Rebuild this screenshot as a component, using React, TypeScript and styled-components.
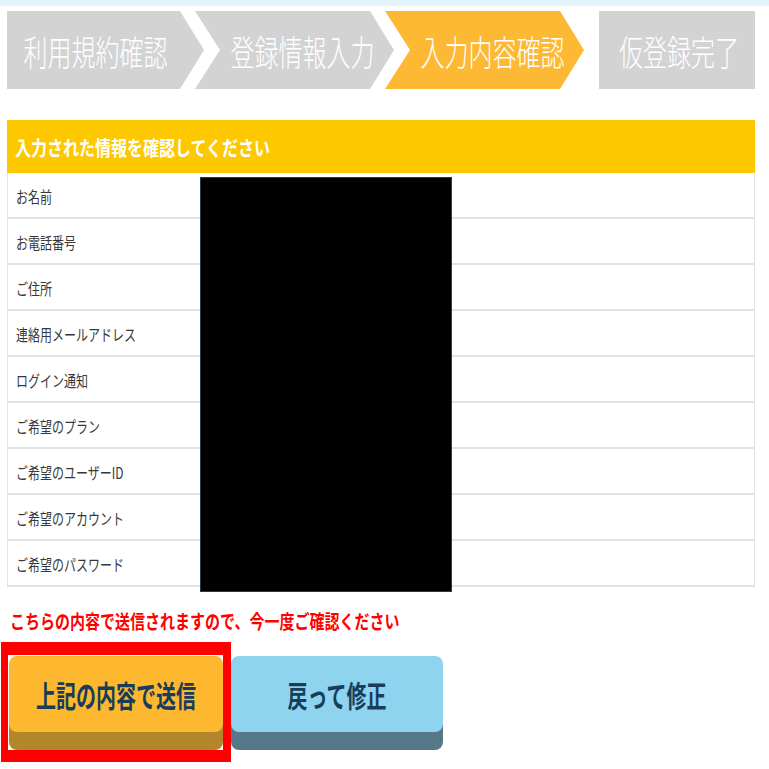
import React from "react";
import styled, { createGlobalStyle } from "styled-components";

const GlobalStyle = createGlobalStyle`
  html, body {
    margin: 0;
    padding: 0;
    background: #ffffff;
  }
  body {
    font-family: "Noto Sans CJK JP", "Noto Sans", sans-serif;
    color: #333333;
  }
`;

const Page = styled.div`
  width: 769px;
  height: 769px;
  overflow: hidden;
`;

const TopStrip = styled.div`
  height: 6px;
  background: #e4f4fc;
`;

const Steps = styled.div`
  display: flex;
  margin: 5px 0 0 7px;
  height: 78px;
`;

const Step = styled.div<{ $active?: boolean; $kind: "first" | "mid" | "last" }>`
  display: flex;
  align-items: center;
  justify-content: center;
  height: 100%;
  width: ${(p) => (p.$kind === "last" ? "156px" : p.$kind === "first" ? "197px" : "199px")};
  margin-left: ${(p) => (p.$kind === "first" ? "0" : p.$kind === "last" ? "15px" : "-9px")};
  padding: ${(p) =>
    p.$kind === "first" ? "0 20px 0 0" : p.$kind === "mid" ? "0 20px 0 36px" : "0 0 0 4px"};
  box-sizing: border-box;
  background: ${(p) => (p.$active ? "#fdb933" : "#d3d3d3")};
  color: #ffffff;
  font-size: 24px;
  font-weight: 300;
  clip-path: ${(p) =>
    p.$kind === "first"
      ? "polygon(0 0, calc(100% - 24px) 0, 100% 50%, calc(100% - 24px) 100%, 0 100%)"
      : p.$kind === "mid"
      ? "polygon(0 0, calc(100% - 24px) 0, 100% 50%, calc(100% - 24px) 100%, 0 100%, 25px 50%)"
      : "none"};
`;

const Tall = styled.span<{ $y?: number }>`
  display: inline-block;
  white-space: nowrap;
  transform: scaleY(${(p) => p.$y ?? 1.4});
`;

const Table = styled.div`
  position: relative;
  width: 748px;
  margin: 31px 0 0 7px;
`;

const Header = styled.div`
  display: flex;
  align-items: center;
  height: 53px;
  padding-left: 8px;
  background: #fec800;
  color: #ffffff;
  font-size: 16px;
  font-weight: 700;
`;

const Row = styled.div`
  display: grid;
  grid-template-columns: 193px 1fr;
  height: 46px;
  box-sizing: border-box;
  border-left: 1px solid #e2e2e2;
  border-right: 1px solid #e2e2e2;
  border-bottom: 2px solid #e2e2e2;
`;

const Label = styled.div`
  display: flex;
  align-items: center;
  padding-left: 8px;
  font-size: 12px;
  color: #383838;
`;

const Value = styled.div``;

const Redaction = styled.div`
  position: absolute;
  left: 193px;
  top: 57px;
  width: 252px;
  height: 415px;
  box-sizing: border-box;
  background: #000000;
  border: 1px solid #24395a;
`;

const Notice = styled.div`
  margin: 24px 0 0 10px;
  height: 20px;
  line-height: 20px;
  color: #ff0000;
  font-size: 15px;
  font-weight: 700;
`;

const Buttons = styled.div`
  display: flex;
  align-items: flex-start;
  margin-top: 11px;
`;

const RedFrame = styled.div`
  margin-left: 1px;
  border-style: solid;
  border-color: #ff0000;
  border-width: 13px 8px 12px 7px;
  padding: 1px 0 18px 1px;
`;

const ActionButton = styled.button<{ $face: string; $shade: string; $w: number }>`
  display: flex;
  align-items: center;
  justify-content: center;
  width: ${(p) => p.$w}px;
  height: 76px;
  padding: 0;
  border: none;
  border-radius: 8px;
  background: ${(p) => p.$face};
  box-shadow: 0 18px 0 ${(p) => p.$shade};
  color: #173d5a;
  font-family: "Noto Sans CJK JP", "Noto Sans", sans-serif;
  font-size: 20px;
  font-weight: 700;
  cursor: pointer;
`;

const SecondWrap = styled.div`
  margin-top: 14px;
`;

const steps: { label: string; kind: "first" | "mid" | "last"; active?: boolean }[] = [
  { label: "利用規約確認", kind: "first" },
  { label: "登録情報入力", kind: "mid" },
  { label: "入力内容確認", kind: "mid", active: true },
  { label: "仮登録完了", kind: "last" },
];

const fields = [
  "お名前",
  "お電話番号",
  "ご住所",
  "連絡用メールアドレス",
  "ログイン通知",
  "ご希望のプラン",
  "ご希望のユーザーID",
  "ご希望のアカウント",
  "ご希望のパスワード",
];

const App = () => {
  return (
    <>
      <GlobalStyle />
      <Page>
        <TopStrip />
        <Steps>
          {steps.map((s) => (
            <Step key={s.label} $kind={s.kind} $active={s.active}>
              <Tall $y={1.45}>{s.label}</Tall>
            </Step>
          ))}
        </Steps>

        <Table>
          <Header>
            <Tall $y={1.3}>入力された情報を確認してください</Tall>
          </Header>
          {fields.map((f) => (
            <Row key={f}>
              <Label>
                <Tall $y={1.3}>{f}</Tall>
              </Label>
              <Value />
            </Row>
          ))}
          <Redaction />
        </Table>

        <Notice>
          <Tall $y={1.3}>こちらの内容で送信されますので、今一度ご確認ください</Tall>
        </Notice>

        <Buttons>
          <RedFrame>
            <ActionButton $face="#fdb82f" $shade="#b4862a" $w={214}>
              <Tall $y={1.5}>上記の内容で送信</Tall>
            </ActionButton>
          </RedFrame>
          <SecondWrap>
            <ActionButton $face="#8fd4ef" $shade="#56798a" $w={212}>
              <Tall $y={1.5}>戻って修正</Tall>
            </ActionButton>
          </SecondWrap>
        </Buttons>
      </Page>
    </>
  );
};

export default App;
